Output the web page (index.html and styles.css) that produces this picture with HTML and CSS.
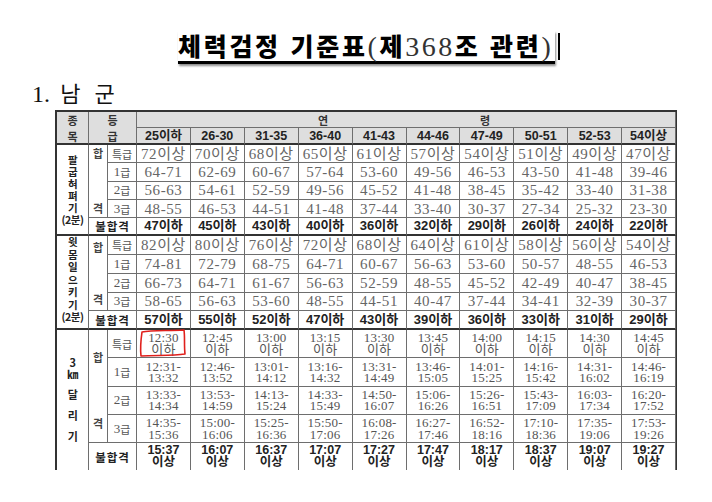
FILE: index.html
```html
<!DOCTYPE html>
<html lang="ko">
<head>
<meta charset="utf-8">
<title>체력검정 기준표</title>
<link rel="stylesheet" href="styles.css">
</head>
<body>
<div class="page">
  <div class="title-row">
    <h1 class="title"><span class="tk">체력검정 기준표</span><span class="ts">(</span><span class="tk">제</span><span class="ts">368</span><span class="tk">조 관련</span><span class="ts">)</span></h1>
    <span class="cursor"></span>
  </div>
  <h2 class="heading"><span class="hn">1.</span> 남 군</h2>
  <div class="clip">
    <div class="grid">
      <!-- header -->
      <div class="c hd hd-ev"><span>종<br>목</span></div>
      <div class="c hd hd-gr"><span>등<br>급</span></div>
      <div class="c hd age"><span>연</span><span>령</span></div>
      <div class="c ag">25이하</div><div class="c ag">26-30</div><div class="c ag">31-35</div><div class="c ag">36-40</div><div class="c ag">41-43</div><div class="c ag">44-46</div><div class="c ag">47-49</div><div class="c ag">50-51</div><div class="c ag">52-53</div><div class="c ag">54이상</div>

      <!-- 팔굽혀펴기 -->
      <div class="c ev ev-a"><span>팔<br>굽<br>혀<br>펴<br>기<br>(2분)</span></div>
      <div class="c ps ps-a"><span>합</span><span>격</span></div>
      <div class="c gr">특급</div>
      <div class="c v">72이상</div><div class="c v">70이상</div><div class="c v">68이상</div><div class="c v">65이상</div><div class="c v">61이상</div><div class="c v">57이상</div><div class="c v">54이상</div><div class="c v">51이상</div><div class="c v">49이상</div><div class="c v">47이상</div>
      <div class="c gr"><span class="gn">1</span>급</div>
      <div class="c v">64-71</div><div class="c v">62-69</div><div class="c v">60-67</div><div class="c v">57-64</div><div class="c v">53-60</div><div class="c v">49-56</div><div class="c v">46-53</div><div class="c v">43-50</div><div class="c v">41-48</div><div class="c v">39-46</div>
      <div class="c gr"><span class="gn">2</span>급</div>
      <div class="c v">56-63</div><div class="c v">54-61</div><div class="c v">52-59</div><div class="c v">49-56</div><div class="c v">45-52</div><div class="c v">41-48</div><div class="c v">38-45</div><div class="c v">35-42</div><div class="c v">33-40</div><div class="c v">31-38</div>
      <div class="c gr"><span class="gn">3</span>급</div>
      <div class="c v">48-55</div><div class="c v">46-53</div><div class="c v">44-51</div><div class="c v">41-48</div><div class="c v">37-44</div><div class="c v">33-40</div><div class="c v">30-37</div><div class="c v">27-34</div><div class="c v">25-32</div><div class="c v">23-30</div>
      <div class="c fl">불합격</div>
      <div class="c f">47이하</div><div class="c f">45이하</div><div class="c f">43이하</div><div class="c f">40이하</div><div class="c f">36이하</div><div class="c f">32이하</div><div class="c f">29이하</div><div class="c f">26이하</div><div class="c f">24이하</div><div class="c f">22이하</div>

      <!-- 윗몸일으키기 -->
      <div class="c ev ev-b"><span>윗<br>몸<br>일<br>으<br>키<br>기<br>(2분)</span></div>
      <div class="c ps ps-b"><span>합</span><span>격</span></div>
      <div class="c gr">특급</div>
      <div class="c v">82이상</div><div class="c v">80이상</div><div class="c v">76이상</div><div class="c v">72이상</div><div class="c v">68이상</div><div class="c v">64이상</div><div class="c v">61이상</div><div class="c v">58이상</div><div class="c v">56이상</div><div class="c v">54이상</div>
      <div class="c gr"><span class="gn">1</span>급</div>
      <div class="c v">74-81</div><div class="c v">72-79</div><div class="c v">68-75</div><div class="c v">64-71</div><div class="c v">60-67</div><div class="c v">56-63</div><div class="c v">53-60</div><div class="c v">50-57</div><div class="c v">48-55</div><div class="c v">46-53</div>
      <div class="c gr"><span class="gn">2</span>급</div>
      <div class="c v">66-73</div><div class="c v">64-71</div><div class="c v">61-67</div><div class="c v">56-63</div><div class="c v">52-59</div><div class="c v">48-55</div><div class="c v">45-52</div><div class="c v">42-49</div><div class="c v">40-47</div><div class="c v">38-45</div>
      <div class="c gr"><span class="gn">3</span>급</div>
      <div class="c v">58-65</div><div class="c v">56-63</div><div class="c v">53-60</div><div class="c v">48-55</div><div class="c v">44-51</div><div class="c v">40-47</div><div class="c v">37-44</div><div class="c v">34-41</div><div class="c v">32-39</div><div class="c v">30-37</div>
      <div class="c fl">불합격</div>
      <div class="c f">57이하</div><div class="c f">55이하</div><div class="c f">52이하</div><div class="c f">47이하</div><div class="c f">43이하</div><div class="c f">39이하</div><div class="c f">36이하</div><div class="c f">33이하</div><div class="c f">31이하</div><div class="c f">29이하</div>

      <!-- 3km 달리기 -->
      <div class="c ev ev-c"><span class="km">3<br>㎞</span><span>달</span><span>리</span><span>기</span></div>
      <div class="c ps ps-c"><span>합</span><span>격</span></div>
      <div class="c gr">특급</div>
      <div class="c t mark"><span>12:30<br>이하</span><svg class="ring" viewBox="0 0 50 28" aria-hidden="true"><path d="M4 3 C14 1 30 2 46 1 C47 8 46 16 47 25 C34 27 18 26 3 27 C2 18 3 10 4 3 Z" fill="none" stroke="#e0201c" stroke-width="1.6" stroke-linejoin="round"/></svg></div>
      <div class="c t"><span>12:45<br>이하</span></div><div class="c t"><span>13:00<br>이하</span></div><div class="c t"><span>13:15<br>이하</span></div><div class="c t"><span>13:30<br>이하</span></div><div class="c t"><span>13:45<br>이하</span></div><div class="c t"><span>14:00<br>이하</span></div><div class="c t"><span>14:15<br>이하</span></div><div class="c t"><span>14:30<br>이하</span></div><div class="c t"><span>14:45<br>이하</span></div>
      <div class="c gr"><span class="gn">1</span>급</div>
      <div class="c t"><span>12:31-<br>13:32</span></div><div class="c t"><span>12:46-<br>13:52</span></div><div class="c t"><span>13:01-<br>14:12</span></div><div class="c t"><span>13:16-<br>14:32</span></div><div class="c t"><span>13:31-<br>14:49</span></div><div class="c t"><span>13:46-<br>15:05</span></div><div class="c t"><span>14:01-<br>15:25</span></div><div class="c t"><span>14:16-<br>15:42</span></div><div class="c t"><span>14:31-<br>16:02</span></div><div class="c t"><span>14:46-<br>16:19</span></div>
      <div class="c gr"><span class="gn">2</span>급</div>
      <div class="c t"><span>13:33-<br>14:34</span></div><div class="c t"><span>13:53-<br>14:59</span></div><div class="c t"><span>14:13-<br>15:24</span></div><div class="c t"><span>14:33-<br>15:49</span></div><div class="c t"><span>14:50-<br>16:07</span></div><div class="c t"><span>15:06-<br>16:26</span></div><div class="c t"><span>15:26-<br>16:51</span></div><div class="c t"><span>15:43-<br>17:09</span></div><div class="c t"><span>16:03-<br>17:34</span></div><div class="c t"><span>16:20-<br>17:52</span></div>
      <div class="c gr"><span class="gn">3</span>급</div>
      <div class="c t"><span>14:35-<br>15:36</span></div><div class="c t"><span>15:00-<br>16:06</span></div><div class="c t"><span>15:25-<br>16:36</span></div><div class="c t"><span>15:50-<br>17:06</span></div><div class="c t"><span>16:08-<br>17:26</span></div><div class="c t"><span>16:27-<br>17:46</span></div><div class="c t"><span>16:52-<br>18:16</span></div><div class="c t"><span>17:10-<br>18:36</span></div><div class="c t"><span>17:35-<br>19:06</span></div><div class="c t"><span>17:53-<br>19:26</span></div>
      <div class="c fl">불합격</div>
      <div class="c f tb"><span>15:37<br>이상</span></div><div class="c f tb"><span>16:07<br>이상</span></div><div class="c f tb"><span>16:37<br>이상</span></div><div class="c f tb"><span>17:07<br>이상</span></div><div class="c f tb"><span>17:27<br>이상</span></div><div class="c f tb"><span>17:47<br>이상</span></div><div class="c f tb"><span>18:17<br>이상</span></div><div class="c f tb"><span>18:37<br>이상</span></div><div class="c f tb"><span>19:07<br>이상</span></div><div class="c f tb"><span>19:27<br>이상</span></div>
    </div>
  </div>
</div>
</body>
</html>
```

FILE: styles.css
```css
html, body {
  margin: 0;
  padding: 0;
  background: #fff;
}
body {
  font-family: "Noto Sans CJK KR", "Liberation Sans", sans-serif;
  color: #111;
}
.page {
  width: 712px;
  height: 502px;
  overflow: hidden;
}

/* title */
.title-row {
  display: flex;
  align-items: flex-end;
  padding: 31px 0 0 178px;
}
.title {
  margin: 0;
  font-size: 25px;
  line-height: 28px;
  font-weight: 900;
  color: #000;
  border-bottom: 3px solid #000;
  box-shadow: 1px 2px 2px rgba(0, 0, 0, 0.45);
  white-space: nowrap;
  padding-right: 2px;
}
.tk {
  font-family: "Noto Sans CJK KR", sans-serif;
  font-weight: 900;
  letter-spacing: 2.7px;
}
.ts {
  font-family: "Liberation Serif", serif;
  font-weight: 400;
  font-size: 28px;
  letter-spacing: 2.5px;
  color: #333;
}
.cursor {
  width: 2px;
  height: 27px;
  background: #000;
  margin: 0 0 4px 3px;
}

/* section heading */
.heading {
  margin: 15px 0 0 32px;
  font-size: 22px;
  line-height: 26px;
  font-weight: 400;
  color: #111;
  font-family: "Noto Sans CJK KR", sans-serif;
  letter-spacing: 4px;
}
.hn {
  font-family: "Liberation Serif", serif;
  font-size: 24px;
  letter-spacing: 0;
}

/* table as grid */
.clip {
  margin: 3px 0 0 55px;
  height: 360px;
  overflow: hidden;
}
.grid {
  box-sizing: border-box;
  width: 622px;
  display: grid;
  grid-template-columns: 32px 19px 29px repeat(10, 1fr);
  grid-template-rows: 16px 17px repeat(5, 18.3px) repeat(5, 18.7px) repeat(5, 28.4px);
  border-top: 2px solid #333;
  border-left: 2px solid #333;
  border-right: 1px solid #333;
  border-bottom: 2px solid #333;
}
.c {
  box-sizing: border-box;
  border-right: 1px solid #6e6e6e;
  border-bottom: 1px solid #6e6e6e;
  display: flex;
  align-items: center;
  justify-content: center;
  text-align: center;
  white-space: nowrap;
  overflow: visible;
}

/* header */
.hd, .ag {
  background: #dedede;
  color: #222;
  font-weight: 700;
}
.hd {
  font-size: 11px;
  line-height: 16px;
  color: #333;
}
.hd-ev { grid-row: span 2; border-bottom: 2px solid #333; }
.hd-gr { grid-row: span 2; grid-column: span 2; border-bottom: 2px solid #333; }
.age {
  grid-column: span 10;
  line-height: 14px;
  gap: 152px;
  padding-right: 4px;
}
.ag {
  font-family: "Liberation Sans", "Noto Sans CJK KR", sans-serif;
  font-size: 12.5px;
  line-height: 14px;
  border-bottom: 2px solid #333;
}

/* left labels */
.ev {
  grid-row: span 5;
  border-bottom: 2px solid #333;
  font-size: 10.5px;
  font-weight: 700;
  color: #222;
  line-height: 12px;
  letter-spacing: -0.5px;
}
.ev-b { line-height: 12.5px; padding-bottom: 4px; }
.ev-c {
  flex-direction: column;
  justify-content: flex-start;
  font-size: 11px;
  line-height: 21px;
  padding-top: 26px;
}
.ev-c .km {
  line-height: 12px;
  padding-bottom: 4px;
}
.ps {
  grid-row: span 4;
  flex-direction: column;
  justify-content: space-between;
  font-size: 11px;
  font-weight: 700;
  color: #444;
  line-height: 12px;
}
.ps-a { padding: 2px 0 3px; }
.ps-b { padding: 5px 0 5px; }
.ps-c { padding: 21px 0 13px; }
.gr {
  font-size: 11px;
  color: #555;
  line-height: 14px;
}
.gn {
  font-family: "Liberation Serif", serif;
  font-size: 13px;
}

/* values */
.v {
  font-family: "Liberation Serif", "Noto Sans CJK KR", serif;
  font-size: 15px;
  letter-spacing: 0.6px;
  line-height: 14px;
  color: #666;
}
.fl {
  grid-column: span 2;
  border-bottom: 2px solid #333;
  font-size: 11.5px;
  font-weight: 700;
  letter-spacing: 1px;
  color: #222;
  line-height: 14px;
}
.f {
  border-bottom: 2px solid #333;
  font-family: "Liberation Sans", "Noto Sans CJK KR", sans-serif;
  font-weight: 700;
  font-size: 13px;
  line-height: 14px;
  color: #222;
}

/* running times */
.t {
  font-family: "Liberation Serif", "Noto Sans CJK KR", serif;
  font-size: 13px;
  line-height: 11.5px;
  letter-spacing: 0.2px;
  color: #555;
}
.tb {
  font-size: 12.5px;
  line-height: 11.5px;
}
.mark { position: relative; }
.ring {
  position: absolute;
  left: 1px;
  top: -1px;
  width: 50px;
  height: 28px;
}
```
